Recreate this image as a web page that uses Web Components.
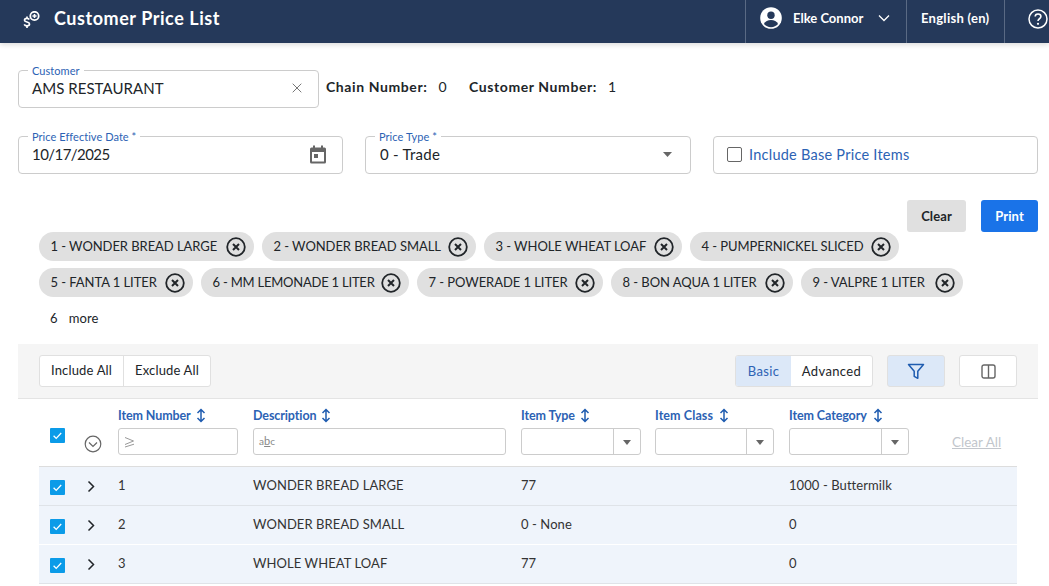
<!DOCTYPE html>
<html lang="en"><head><meta charset="utf-8"><title>Customer Price List</title>
<style>
html,body{margin:0;padding:0;height:586px;overflow:hidden;background:#fff;font-family:Lato,"Noto Sans",sans-serif;color:#212529}
</style></head><body>
<price-app></price-app>
<script>
const el=(tag,html,css)=>customElements.define(tag,class extends HTMLElement{constructor(){super();this.attachShadow({mode:'open'}).innerHTML=`<style>${css}</style>${typeof html==='function'?html(this):html}`}});
const CHECK=`<svg width="15" height="15" viewBox="0 0 15 15" style="display:block"><rect width="15" height="15" rx="1" fill="#0b9be8"/><path d="M3.6 7.8l2.6 2.6 5-5.4" fill="none" stroke="#fff" stroke-width="1.3"/></svg>`;
const SORT=`<svg width="10" height="15" viewBox="0 0 10 15" style="display:block"><path d="M5 1.500v12M1.500 5L5 1.500 8.500 5M1.500 10L5 13.500 8.500 10" fill="none" stroke="#1f5cb0" stroke-width="1.500"/></svg>`;

el('app-header',`
<svg class="logo" width="18" height="18" viewBox="0 0 18 18"><circle cx="12.500" cy="5" r="4.200" fill="none" stroke="#fff" stroke-width="1.800"/><path d="M12.500 2.900v4.200M10.400 5h4.200" stroke="#fff" stroke-width="1.600"/><path d="M7.300 8.500C6.800 7.700 5.900 7.300 5 7.300c-1.400 0-2.500.7-2.500 1.900 0 2.300 5 1.300 5 3.700 0 1.200-1.100 1.900-2.600 1.900-1.200 0-2.200-.5-2.700-1.400" fill="none" stroke="#fff" stroke-width="1.700"/><path d="M5 5.600v1.800M5 14.800v2.200" stroke="#fff" stroke-width="1.700"/></svg>
<h1>Customer Price List</h1>
<div class="cell user"><svg width="22" height="22" viewBox="0 0 22 22"><circle cx="11" cy="11" r="10.800" fill="#fff"/><circle cx="11" cy="8.300" r="3.700" fill="#25395a"/><path d="M3.900 17c1.300-2.700 4-3.900 7.100-3.900s5.800 1.200 7.100 3.900c-1.700 2-4.300 3.200-7.100 3.200S5.600 19 3.900 17z" fill="#25395a"/></svg><span>Elke Connor</span><svg class="chev" width="12" height="8" viewBox="0 0 12 8"><path d="M1 1.500l5 5 5-5" fill="none" stroke="#fff" stroke-width="1.300"/></svg></div>
<div class="cell lang"><span>English (en)</span></div>
<div class="cell help"><svg width="20" height="20" viewBox="0 0 20 20"><circle cx="10" cy="10" r="9" fill="none" stroke="#fff" stroke-width="1.500"/><path d="M7.200 7.600c0-1.600 1.300-2.600 2.800-2.600s2.900 1 2.900 2.500c0 2.300-2.900 2.200-2.900 4.500" fill="none" stroke="#fff" stroke-width="1.600"/><circle cx="10" cy="14.800" r="1.100" fill="#fff"/></svg></div>`,
`:host{display:flex;align-items:stretch;height:43px;background:#25395a;color:#fff;box-shadow:0 2px 5px rgba(0,0,0,.14);position:relative}
.logo{align-self:center;margin:0 0 0 22px;position:relative;top:-2px}
h1{flex:1;margin:0 0 0 14px;font-size:18px;font-weight:700;line-height:37px;letter-spacing:.55px}
.cell{display:flex;align-items:center;border-left:1px solid #5a6a84;font-size:13px;font-weight:700;box-sizing:border-box;padding-bottom:7px}
.user{width:161px;padding-left:14px}.user span{margin-left:11px;letter-spacing:0;width:71px}.chev{margin-left:14px}
.lang{width:98px;padding-left:14px;letter-spacing:.28px}.help{width:45px;padding-left:23px;padding-bottom:6px}`);

el('out-field',h=>`${h.getAttribute('label')?`<label>${h.getAttribute('label')}</label>`:''}<div class="in"><slot></slot></div>`,
`:host{display:block;position:relative;height:38px;box-sizing:border-box;padding:0 13px;border:1px solid #ccc;border-radius:4px;font-size:15px;color:#212529}
label{position:absolute;top:-6px;left:9px;font-size:11px;line-height:11px;color:#2c62b4;padding:0 4px;background:#fff;white-space:nowrap;letter-spacing:.05px}
.in{display:flex;align-items:center;justify-content:space-between;height:34px;letter-spacing:.05px}`);

el('info-item',h=>`<b>${h.getAttribute('label')}</b><span>${h.getAttribute('value')}</span>`,
`:host{display:inline-flex;font-size:14px;gap:11px;color:#212529;padding-bottom:6px}b{font-weight:700;letter-spacing:.6px}span{font-size:14px}`);

el('top-form',`<div class="r1"><out-field label="Customer" style="width:301px"><span>AMS RESTAURANT</span><svg width="10" height="10" viewBox="0 0 10 10" style="margin-right:3px"><path d="M.7.7l8.600 8.600M9.300.7L.7 9.300" stroke="#777" stroke-width="1"/></svg></out-field>
<info-item label="Chain Number:" value="0"></info-item><info-item label="Customer Number:" value="1"></info-item></div>
<div class="r2"><out-field label="Price Effective Date *"><span style="letter-spacing:-.55px">10/17/2025</span><svg width="18" height="19" viewBox="0 0 18 19" style="margin-right:2px"><path fill="#666" d="M4 .5h2v2h6v-2h2v2h1.500A1.500 1.500 0 0 1 17 4v13a1.500 1.500 0 0 1-1.500 1.500h-13A1.500 1.500 0 0 1 1 17V4a1.500 1.500 0 0 1 1.500-1.500H4zM3 7v9.500h12V7zM5 9h4v4H5z"/></svg></out-field>
<out-field label="Price Type *"><span style="letter-spacing:.25px;margin-left:1px">0 - Trade</span><svg width="9" height="5" viewBox="0 0 9 5" style="margin-right:5px"><path d="M0 0h9L4.500 5z" fill="#666"/></svg></out-field>
<out-field><span class="chk"><span class="box"></span><span class="lb">Include Base Price Items</span></span></out-field></div>
<div class="btns"><button class="c">Clear</button><button class="p">Print</button></div>`,
`:host{display:block;padding:27px 11px 0 18px}
.r1{display:flex;align-items:center;gap:0}
info-item:nth-of-type(1){margin-left:7px;width:143px}
.r2{display:grid;grid-template-columns:325px 326px 325px;gap:22px;margin-top:28px}
.chk{display:flex;align-items:center;gap:7px}.box{width:13px;height:13px;border:1px solid #666;border-radius:2px;display:block}
.lb{color:#2c62b4;font-size:14.500px;letter-spacing:.25px;white-space:nowrap}
.btns{display:flex;justify-content:flex-end;gap:15px;margin-top:26px}
button{border:0;border-radius:3px;height:32px;font:700 13px Lato,sans-serif;padding:0;letter-spacing:.1px}
.c{width:59px;background:#e0e0e0;color:#212529}.p{width:57px;background:#1a73e8;color:#fff}`);

el('item-chip',h=>`<span style="letter-spacing:${h.getAttribute('ls')||'-.06px'}">${h.getAttribute('text')}</span><svg width="20" height="20" viewBox="0 0 20 20"><circle cx="10" cy="10" r="8.800" fill="none" stroke="#212529" stroke-width="1.800"/><path d="M7 7l6 6M13 7l-6 6" stroke="#212529" stroke-width="2"/></svg>`,
`:host{display:inline-flex;align-items:center;justify-content:space-between;height:29px;background:#e0e0e0;border-radius:15px;padding:0 8px 0 11.500px;font-size:13px;color:#212529;white-space:nowrap;box-sizing:border-box}
span{margin-top:-2px}`);

el('chip-list',`<div class="l"><slot></slot></div><div class="m"><span>6</span><span>more</span></div>`,
`:host{display:block;padding:0 0 0 39px}.l{display:flex;flex-wrap:wrap;gap:7px 8px;width:950px}
.m{display:flex;gap:11px;font-size:13px;margin:13px 0 0 11px;height:17px;line-height:17px;letter-spacing:.1px}`);

el('table-tools',`<div class="seg inc"><span class="b">Include All</span><span class="b">Exclude All</span></div>
<div class="sp"></div>
<div class="seg mode"><span class="b on">Basic</span><span class="b">Advanced</span></div>
<span class="ic on"><svg width="18" height="17" viewBox="0 0 18 17"><path d="M1.500 1.500h15l-5.700 6.800v7l-3.600-2V8.300z" fill="none" stroke="#1f5cb0" stroke-width="1.500" stroke-linejoin="round"/></svg></span>
<span class="ic"><svg width="15" height="15" viewBox="0 0 15 15"><rect x="1" y="1" width="13" height="13" rx="2" fill="none" stroke="#666" stroke-width="1.400"/><path d="M7.500 1v13" stroke="#666" stroke-width="1.400"/></svg></span>`,
`:host{display:flex;align-items:center;height:54px;margin:0 11px 0 18px;padding:0 21px;background:#f5f5f5;border-bottom:1px solid #e4e4e4;box-sizing:content-box}
.sp{flex:1}
.seg{display:flex;height:32px;box-sizing:border-box;border:1px solid #e0e0e0;border-radius:3px;background:#fff;font-size:13px;overflow:hidden}
.b{display:flex;align-items:center;padding:0 11px;letter-spacing:.16px;white-space:nowrap;padding-bottom:1px}.b+.b{border-left:1px solid #e0e0e0}
.inc .b{padding-bottom:3px}
.mode .b.on{background:#dce8f8;color:#2c62b4;border:0}.mode .b+.b{border:0}
.mode{width:138px;letter-spacing:.35px}.mode .b{letter-spacing:.35px}.mode .b:first-child{width:55px;box-sizing:border-box;justify-content:center;padding:0}.mode .b:last-child{padding:0;flex:1;justify-content:center}
.ic{display:flex;align-items:center;justify-content:center;width:58px;height:32px;box-sizing:border-box;border:1px solid #e0e0e0;border-radius:3px;background:#fff;margin-left:14px}
.ic.on{background:#dce8f8}`);

const GRID='grid-template-columns:79px 135px 268px 134px 134px 1fr';
el('filter-head',`
<div class="c0">${CHECK}<svg class="all" width="18" height="18" viewBox="0 0 18 18"><circle cx="9" cy="9" r="7.800" fill="none" stroke="#666" stroke-width="1.200"/><path d="M5 7.500l4 4 4-4" fill="none" stroke="#666" stroke-width="1.200"/></svg></div>
<div class="h"><span class="t">Item Number ${SORT}</span><span class="inp ge" style="width:120px"><svg width="11" height="12" viewBox="0 0 11 12"><path d="M1 1.500l8.500 3.500L1 8.500M1 11l9-2.800" fill="none" stroke="#999" stroke-width="1"/></svg></span></div>
<div class="h"><span class="t">Description ${SORT}</span><span class="inp abc" style="width:253px"><span class="a">a<u>b</u>c</span></span></div>
<div class="h"><span class="t">Item Type ${SORT}</span><span class="inp sel" style="width:120px"><i></i></span></div>
<div class="h"><span class="t" style="letter-spacing:.1px;gap:6px">Item Class ${SORT}</span><span class="inp sel" style="width:119px"><i></i></span></div>
<div class="h last"><div><span class="t" style="gap:6px">Item Category ${SORT}</span><span class="inp sel" style="width:120px"><i></i></span></div><a>Clear All</a></div>`,
`:host{display:grid;${GRID};margin:0 32px 0 39px;height:68px;box-sizing:border-box;border-bottom:1px solid #ddd;align-content:start}
.c0{position:relative;height:66px}.c0>svg:first-child{position:absolute;left:11px;top:29px}.all{position:absolute;left:45px;top:36px}
.t{display:flex;align-items:center;gap:5px;font-size:12.500px;font-weight:700;color:#2c62b4;height:16px;margin-top:8px;white-space:nowrap;letter-spacing:-.1px}
.inp{display:block;position:relative;height:27px;box-sizing:border-box;border:1px solid #ccc;border-radius:3px;margin-top:5px;background:#fff;padding:5px 0 0 5px;font-size:10px;color:#888}
.ge{padding-top:7px}
.a{letter-spacing:.1px}.a u{font-size:11px}
.sel i{position:absolute;right:0;top:0;bottom:0;width:26px;border-left:1px solid #ccc}
.sel i::after{content:"";position:absolute;left:9px;top:11px;border:4px solid transparent;border-top:5px solid #666;border-bottom:0}
.last{display:flex}.last a{font-size:13.500px;color:#c2c6cc;text-decoration:underline;margin:35px 0 0 43px;white-space:nowrap}`);

el('data-row',h=>`<div class="ck">${CHECK}</div><svg class="ex" width="9" height="13" viewBox="0 0 9 13"><path d="M1.500 1.500l5 5-5 5" fill="none" stroke="#212529" stroke-width="1.500"/></svg>${['n','d','t','k','c'].map(a=>`<div class="v">${h.getAttribute(a)||''}</div>`).join('')}`,
`:host{display:grid;grid-template-columns:38px 41px 135px 268px 134px 134px 1fr;align-items:center;height:39px;box-sizing:border-box;margin:0 32px 0 39px;background:#eff4fb;border-bottom:1px solid #dfe3e8;font-size:13px;color:#333;letter-spacing:.08px}
.v{padding-bottom:2px}.ck{padding-left:11px;padding-top:2px}.ex{margin-left:10px}`);

const chips=[['1 - WONDER BREAD LARGE',215],['2 - WONDER BREAD SMALL',214],['3 - WHOLE WHEAT LOAF',198],['4 - PUMPERNICKEL SLICED',209],['5 - FANTA 1 LITER',154],['6 - MM LEMONADE 1 LITER',208,'-.22px'],['7 - POWERADE 1 LITER',186],['8 - BON AQUA 1 LITER',182],['9 - VALPRE 1 LITER',162]];
el('price-app',`<app-header></app-header><top-form></top-form>
<chip-list>${chips.map(([c,w,l])=>`<item-chip text="${c}" ${l?`ls="${l}"`:''} style="width:${w}px"></item-chip>`).join('')}</chip-list>
<table-tools></table-tools><filter-head></filter-head>
<data-row n="1" d="WONDER BREAD LARGE" t="77" c="1000 - Buttermilk"></data-row>
<data-row n="2" d="WONDER BREAD SMALL" t="0 - None" c="0" style="border-bottom-color:#fff"></data-row>
<data-row n="3" d="WHOLE WHEAT LOAF" t="77" c="0"></data-row>`,
`:host{display:block;width:1049px}table-tools{margin-top:17px}`);
</script></body></html>
